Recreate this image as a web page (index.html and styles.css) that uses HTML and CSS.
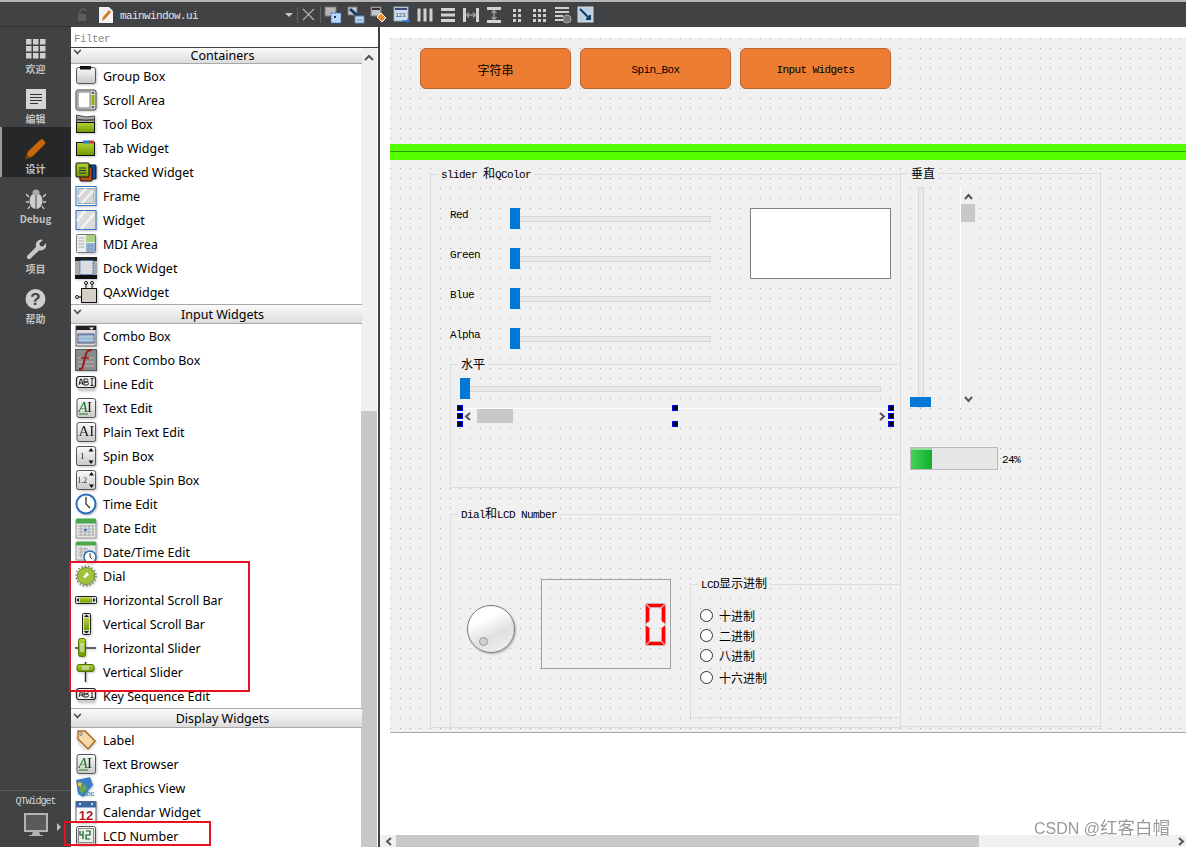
FILE: index.html
```html
<!DOCTYPE html>
<html lang="zh">
<head>
<meta charset="utf-8">
<title>Qt Designer</title>
<link rel="stylesheet" href="styles.css">
</head>
<body>
<svg class="defs" width="0" height="0">
  <defs>
    <linearGradient id="gBtn" x1="0" y1="0" x2="0" y2="1"><stop offset="0" stop-color="#fafafa"/><stop offset="1" stop-color="#c8c8c8"/></linearGradient>
    <linearGradient id="gGreen" x1="0" y1="0" x2="0" y2="1"><stop offset="0" stop-color="#b5d334"/><stop offset="1" stop-color="#6f9a00"/></linearGradient>
    <symbol id="i-ai" viewBox="0 0 22 22"><rect x="2" y="1.5" width="18.500" height="19" rx="2" fill="url(#gBtn)" stroke="#555"/><text x="3.500" y="15" class="ai">AI</text></symbol>
    <symbol id="i-aig" viewBox="0 0 22 22"><rect x="2" y="1.500" width="18.500" height="19" rx="2" fill="url(#gBtn)" stroke="#555"/><text x="3.500" y="15" class="ai aig">A</text><text x="12" y="15" class="ai">I</text><path d="M4 17h9" stroke="#1c7a1c"/></symbol>
    <symbol id="i-ab" viewBox="0 0 22 22"><rect x="1.500" y="3.500" width="19" height="11" rx="2.500" fill="#eee" stroke="#222" stroke-width="1.200"/><path d="M4 12l1.500-6h1l1.500 6M4.500 10h3M9 6h2.500q1.500 0 1.500 1.500T11.500 9H9zM9 9h3q1.500 0 1.500 1.500T12 12H9zM15.500 5.500h3M17 5.500v7M15.500 12.500h3" stroke="#222" fill="none"/><rect x="3" y="15.500" width="17" height="2" fill="#ccc"/></symbol>
  </defs>
</svg>
<div class="app">
  <div class="topstrip"></div>
  <header class="toolbar">
    <svg class="tb-lock" width="14" height="14" viewBox="0 0 14 14"><rect x="1" y="6" width="8" height="7" fill="#5a5c5e"/><path d="M3 6V3.500Q3 1 6 1t3 2.500" fill="none" stroke="#5a5c5e" stroke-width="1.500"/></svg>
    <svg class="tb-doc" width="14" height="16" viewBox="0 0 14 16"><path d="M0 0h10l4 4v12H0z" fill="#f2f2f2"/><path d="M3 14l1-4 6-7 2 2-6 7z" fill="#d47a1e"/></svg>
    <span class="tb-file">mainwindow.ui</span>
    <span class="tb-caret"></span>
    <span class="tb-sep"></span>
    <svg class="tb-close" width="13" height="13" viewBox="0 0 13 13"><path d="M1 1l11 11M12 1L1 12" stroke="#b4b4b4" stroke-width="1.100"/></svg>
    <span class="tb-sep tb-sep2"></span>
    <div class="tb-icons">
      <svg width="18" height="18" viewBox="0 0 18 18"><rect x="1" y="1" width="11" height="9" fill="#b8b8b8" stroke="#777"/><rect x="7" y="7" width="10" height="10" fill="#bcd8f8" stroke="#36c" stroke-dasharray="2 1"/><rect x="10" y="10" width="2" height="2" fill="#236"/></svg>
      <svg width="18" height="18" viewBox="0 0 18 18"><rect x="1" y="1" width="9" height="8" fill="#c8c8c8" stroke="#777"/><path d="M3 3l9 8" stroke="#0d3d6b" stroke-width="3"/><rect x="8" y="10" width="9" height="7" fill="#bcd8f8" stroke="#68a"/><path d="M10 14h5" stroke="#68a"/></svg>
      <svg width="18" height="18" viewBox="0 0 18 18"><rect x="1" y="1" width="10" height="9" fill="#c4c4c4" stroke="#777"/><rect x="2" y="2" width="8" height="2" fill="#333"/><path d="M11 7l5 5-4 4-5-5z" fill="#f28a2e" stroke="#fff"/></svg>
      <svg width="18" height="18" viewBox="0 0 18 18"><rect x="1" y="1" width="14" height="14" fill="#cfe0f4" stroke="#8aa"/><rect x="2" y="2" width="12" height="2" fill="#447"/><text x="2.500" y="11" class="tb-num">123</text><path d="M9 15h8M15 13v4" stroke="#27c" stroke-width="1.500"/></svg>
      <svg width="18" height="18" viewBox="0 0 18 18"><path d="M3 2.500v13M9 2.500v13M15 2.500v13" class="tool-line"/></svg>
      <svg width="18" height="18" viewBox="0 0 18 18"><path d="M2 3.500h14M2 9h14M2 14.500h14" class="tool-line"/></svg>
      <svg width="18" height="18" viewBox="0 0 18 18"><path d="M2.500 2v14M15.500 2v14" class="tool-line"/><path d="M5 9h8M7 6.500L4.500 9 7 11.500M11 6.500L13.500 9 11 11.500" stroke="#9a9a9a" stroke-width="1.500" fill="none"/></svg>
      <svg width="18" height="18" viewBox="0 0 18 18"><path d="M2 2.500h14M2 15.500h14" class="tool-line"/><path d="M9 5v8M6.500 7L9 4.500 11.500 7M6.500 11L9 13.500 11.500 11" stroke="#9a9a9a" stroke-width="1.500" fill="none"/></svg>
      <svg width="18" height="18" viewBox="0 0 18 18"><path d="M5 3h3v3H5zM10 3h3v3h-3zM5 8h3v3H5zM10 8h3v3h-3zM5 13h3v3H5zM10 13h3v3h-3z" fill="#cfcfcf"/></svg>
      <svg width="18" height="18" viewBox="0 0 18 18"><path d="M2 3h3v3H2zM7 3h3v3H7zM12 3h3v3h-3zM2 8h3v3H2zM7 8h3v3H7zM12 8h3v3h-3zM2 13h3v3H2zM7 13h3v3H7zM12 13h3v3h-3z" fill="#cfcfcf"/></svg>
      <svg width="18" height="18" viewBox="0 0 18 18"><path d="M1 2h14M1 6h14M1 10h8M1 14h8" stroke="#d0d0d0" stroke-width="2"/><circle cx="13" cy="13" r="4" fill="#777" stroke="#aaa"/></svg>
      <svg width="18" height="18" viewBox="0 0 18 18"><rect x="1" y="1" width="15" height="15" fill="#b9cfe6" stroke="#d8d8d8"/><path d="M3 3l10 10M13 9v4H9" stroke="#0b3c66" stroke-width="2" fill="none"/></svg>
    </div>
  </header>
  <div class="main">
    <nav class="sidebar">
      <div class="sb-btn">
        <svg class="sb-icon" width="20" height="20" viewBox="0 0 20 20"><path d="M0 0h5.500v5.500H0zM7 0h5.500v5.500H7zM14 0h5.500v5.500H14zM0 7h5.500v5.500H0zM7 7h5.500v5.500H7zM14 7h5.500v5.500H14zM0 14h5.500v5.500H0zM7 14h5.500v5.500H7zM14 14h5.500v5.500H14z" fill="#cfcfcf"/></svg>
        <span class="sb-label">欢迎</span>
      </div>
      <div class="sb-btn">
        <svg class="sb-icon" width="20" height="20" viewBox="0 0 20 20"><rect width="20" height="20" fill="#d6d6d6"/><path d="M4 5.500h12M4 8.500h12M4 11.500h12M4 14.500h8" stroke="#333"/></svg>
        <span class="sb-label">编辑</span>
      </div>
      <div class="sb-btn sb-active">
        <svg class="sb-icon" width="21" height="21" viewBox="0 0 21 21"><path d="M0.500 20.500L3 13 15 1.500q2-1.500 4 .5t.5 4L7.500 18z" fill="#c8660a"/><path d="M0.500 20.500L2 16l3 3z" fill="#7a4006"/></svg>
        <span class="sb-label">设计</span>
      </div>
      <div class="sb-btn">
        <svg class="sb-icon" width="20" height="20" viewBox="0 0 20 20"><ellipse cx="10" cy="12" rx="6.500" ry="8" fill="#cdcdcd"/><path d="M10 5v15" stroke="#404244"/><ellipse cx="10" cy="3.500" rx="3.500" ry="3" fill="#aaa"/><path d="M3 8L0 5M17 8l3-3M3 13H0M17 13h3M4 17l-2 3M16 17l2 3" stroke="#cdcdcd" stroke-width="1.300"/></svg>
        <span class="sb-label">Debug</span>
      </div>
      <div class="sb-btn">
        <svg class="sb-icon" width="20" height="20" viewBox="0 0 20 20"><path d="M1 17L10 8Q9 3 13 1q2-.8 4 0l-3.500 3 .5 3 3 .5L20 4q1 3-1 5.500t-6 2L4 20q-2 .5-3-1z" fill="#c8c8c8"/></svg>
        <span class="sb-label">项目</span>
      </div>
      <div class="sb-btn">
        <svg class="sb-icon" width="21" height="21" viewBox="0 0 21 21"><circle cx="10.500" cy="10.500" r="10" fill="#cfcfcf"/><text x="10.500" y="16" class="help-q">?</text></svg>
        <span class="sb-label">帮助</span>
      </div>
      <div class="sb-bottom">
        <span class="sb-kit">QTWidget</span>
        <div class="sb-target">
          <svg width="24" height="24" viewBox="0 0 24 24"><rect x="1" y="1" width="22" height="17" fill="#585a5c" stroke="#b4b4b4" stroke-width="2"/><path d="M9 18h6l1 4h3v1H5v-1h3z" fill="#b4b4b4"/></svg>
          <span class="sb-arrow"></span>
        </div>
      </div>
    </nav>

    <aside class="panel">
      <div class="filter">Filter</div>
      <div class="box">
        <div class="list">
          <div class="cat cat-first"><span class="chev"></span><span>Containers</span></div>
          <div class="row"><svg class="ic" viewBox="0 0 22 22"><rect x="1.500" y="2.500" width="19" height="16" rx="2" fill="url(#gBtn)" stroke="#555"/><rect x="5" y="1" width="11" height="3.500" fill="#111"/></svg><span>Group Box</span></div>
          <div class="row"><svg class="ic" viewBox="0 0 22 22"><rect x="1" y="1" width="20" height="20" rx="2" fill="#ddd" stroke="#444"/><rect x="3" y="3" width="12" height="16" fill="#fff" stroke="#777"/><rect x="16.500" y="6" width="3" height="10" fill="#8fb000"/><path d="M18 2.500l1.500 2h-3zM18 19.500l1.500-2h-3z" fill="#111"/></svg><span>Scroll Area</span></div>
          <div class="row"><svg class="ic" viewBox="0 0 22 22"><path d="M1.500 2l9 2 9-1v4h-18zM1.500 6l9 1.500 9-1V10h-18z" fill="#aaa" stroke="#444"/><rect x="1.500" y="9.500" width="18" height="10" fill="url(#gGreen)" stroke="#111"/></svg><span>Tool Box</span></div>
          <div class="row"><svg class="ic" viewBox="0 0 22 22"><rect x="1.500" y="5.500" width="18" height="13" fill="url(#gGreen)" stroke="#111"/><rect x="8" y="3.500" width="6" height="3" fill="#2a7dd0"/><rect x="14" y="3.500" width="5" height="3" fill="#d8362a"/></svg><span>Tab Widget</span></div>
          <div class="row"><svg class="ic" viewBox="0 0 22 22"><rect x="9" y="4" width="12" height="14" rx="1" fill="#124a9c" stroke="#111"/><rect x="5" y="6" width="12" height="14" rx="1" fill="#c04c10" stroke="#111"/><rect x="1" y="2" width="13" height="14" rx="1" fill="url(#gGreen)" stroke="#111"/><path d="M4 7h7M4 9.500h7M4 12h7" stroke="#234"/></svg><span>Stacked Widget</span></div>
          <div class="row"><svg class="ic" viewBox="0 0 22 22"><rect x="1" y="1.500" width="20" height="19" fill="#fff" stroke="#2d6fc0"/><rect x="3" y="3.500" width="16" height="15" fill="#d6d6d6" stroke="#8aa"/><path d="M3 12l8-8.500M7 18l11-12" stroke="#f2f2f2" stroke-width="2.500"/></svg><span>Frame</span></div>
          <div class="row"><svg class="ic" viewBox="0 0 22 22"><rect x="1" y="1.500" width="20" height="19" fill="#dcdcdc" stroke="#2d6fc0"/><path d="M2 12l8-10M6 20L19 5" stroke="#f4f4f4" stroke-width="2.500"/></svg><span>Widget</span></div>
          <div class="row"><svg class="ic" viewBox="0 0 22 22"><rect x="1.500" y="1.500" width="19" height="18" rx="1" fill="#eee" stroke="#777"/><rect x="11" y="2" width="9" height="7" fill="#a8d080"/><rect x="11" y="10" width="9" height="9" fill="#8bb6e6"/><path d="M3.500 5h6M3.500 8h6M3.500 11h6M3.500 14h6M11 13h9M11 16h9M14 10v9M17 10v9" stroke="#9a9a9a" stroke-width=".8"/></svg><span>MDI Area</span></div>
          <div class="row"><svg class="ic" viewBox="0 0 22 22"><rect x="0" y="0" width="22" height="4" fill="#222"/><rect x="0" y="18" width="22" height="4" fill="#111"/><rect x="0" y="4" width="22" height="14" fill="#aaa"/><rect x="5" y="3.500" width="13" height="14" fill="#ddd" stroke="#2d6fc0" stroke-dasharray="1.500 1"/></svg><span>Dock Widget</span></div>
          <div class="row"><svg class="ic" viewBox="0 0 22 22"><rect x="6.500" y="7.500" width="15" height="14" fill="#d4d0c8" stroke="#111"/><path d="M11 7.500V3M17 7.500V3M1 16h5" stroke="#111"/><circle cx="11" cy="2" r="1.500" fill="#fff" stroke="#111"/><circle cx="17" cy="2" r="1.500" fill="#fff" stroke="#111"/><circle cx="2" cy="16" r="1.500" fill="#fff" stroke="#111"/></svg><span>QAxWidget</span></div>

          <div class="cat"><span class="chev"></span><span>Input Widgets</span></div>
          <div class="row"><svg class="ic" viewBox="0 0 22 22"><rect x="1" y="1" width="20" height="20" fill="#ddd" stroke="#666"/><rect x="1" y="1" width="20" height="4" fill="#222"/><path d="M14 2.500h5l-2.500 2.500z" fill="#fff"/><rect x="3" y="9" width="16" height="9" fill="#8eb0d8" stroke="#557"/><path d="M3 12h16M3 15h16" stroke="#cdd"/></svg><span>Combo Box</span></div>
          <div class="row"><svg class="ic" viewBox="0 0 22 22"><rect x="0.500" y="0.500" width="21" height="21" fill="#8a8a8a" stroke="#555"/><path d="M3 9h16M3 13h16M3 17h16" stroke="#aaa" stroke-width="1.500"/><path d="M4 20q3 1 4-3l3-12q1-4 6-4" fill="none" stroke="#a01818" stroke-width="2"/><path d="M6 9h8" stroke="#a01818" stroke-width="1.500"/></svg><span>Font Combo Box</span></div>
          <div class="row"><svg class="ic"><use href="#i-ab"/></svg><span>Line Edit</span></div>
          <div class="row"><svg class="ic"><use href="#i-aig"/></svg><span>Text Edit</span></div>
          <div class="row"><svg class="ic"><use href="#i-ai"/></svg><span>Plain Text Edit</span></div>
          <div class="row"><svg class="ic" viewBox="0 0 22 22"><rect x="1.500" y="1.500" width="19" height="19" rx="2" fill="url(#gBtn)" stroke="#555"/><text x="5" y="14" class="spin">1</text><path d="M16 3l2.500 3.500h-5zM16 19l2.500-3.500h-5z" fill="#111"/></svg><span>Spin Box</span></div>
          <div class="row"><svg class="ic" viewBox="0 0 22 22"><rect x="1.500" y="1.500" width="19" height="19" rx="2" fill="url(#gBtn)" stroke="#555"/><text x="2.500" y="14" class="spin spin-s">1.2</text><path d="M16.500 3l2.500 3.500h-5zM16.500 19l2.500-3.500h-5z" fill="#111"/></svg><span>Double Spin Box</span></div>
          <div class="row"><svg class="ic" viewBox="0 0 22 22"><circle cx="11" cy="11" r="9.500" fill="#fff" stroke="#2d6fb8" stroke-width="2"/><path d="M11 4v7l4 4" fill="none" stroke="#333" stroke-width="1.300"/></svg><span>Time Edit</span></div>
          <div class="row"><svg class="ic" viewBox="0 0 22 22"><rect x="1" y="4" width="20" height="17" fill="#e6e6e6" stroke="#999"/><rect x="1" y="1.500" width="20" height="5" rx="1" fill="#4aa84a"/><path d="M3 9h16M3 12h16M3 15h16M3 18h16M6 8v11M10 8v11M14 8v11M18 8v11" stroke="#aaa"/><rect x="9" y="12" width="3" height="2" fill="#47c"/></svg><span>Date Edit</span></div>
          <div class="row"><svg class="ic" viewBox="0 0 22 22"><rect x="1" y="2" width="20" height="17" fill="#e6e6e6" stroke="#999"/><rect x="1" y="0.500" width="20" height="4" rx="1" fill="#4aa84a"/><path d="M3 8h10M3 11h8M3 14h6M6 6v11M10 6v7" stroke="#aaa"/><circle cx="15" cy="16" r="6" fill="#fff" stroke="#2d6fb8" stroke-width="1.500"/><path d="M15 12v4l2 2" fill="none" stroke="#333"/></svg><span>Date/Time Edit</span></div>
          <div class="row"><svg class="ic" viewBox="0 0 22 22"><circle cx="11" cy="11" r="10" fill="none" stroke="#777" stroke-width="1.500" stroke-dasharray="1.500 2"/><circle cx="11" cy="11" r="8.500" fill="#a2c23c" stroke="#6a8a20"/><path d="M8 12l4-5 2 3-4 3z" fill="#fff"/></svg><span>Dial</span></div>
          <div class="row"><svg class="ic" viewBox="0 0 22 22"><rect x="0.500" y="7.500" width="21" height="7" rx="1" fill="#ddd" stroke="#222"/><rect x="5" y="8.500" width="12" height="5" fill="url(#gGreen)"/><path d="M1.500 11L4 9v4zM20.500 11L18 9v4z" fill="#111"/></svg><span>Horizontal Scroll Bar</span></div>
          <div class="row"><svg class="ic" viewBox="0 0 22 22"><rect x="7.500" y="0.500" width="8" height="21" rx="1" fill="#ddd" stroke="#222"/><rect x="9" y="5" width="5" height="12" fill="url(#gGreen)"/><path d="M11.500 1.500L14 4H9zM11.500 20.500L14 18H9z" fill="#111"/></svg><span>Vertical Scroll Bar</span></div>
          <div class="row"><svg class="ic" viewBox="0 0 22 22"><path d="M0 11h21" stroke="#333" stroke-width="1.500"/><rect x="3.500" y="1.500" width="7" height="18" rx="2" fill="url(#gGreen)" stroke="#557000"/><path d="M6 6v9M8 6v9" stroke="#eef"/></svg><span>Horizontal Slider</span></div>
          <div class="row"><svg class="ic" viewBox="0 0 22 22"><path d="M10.500 1v20" stroke="#333" stroke-width="1.500"/><rect x="2" y="3.500" width="17" height="7" rx="2" fill="url(#gGreen)" stroke="#557000"/><path d="M7 6h7M7 8h7" stroke="#eef"/></svg><span>Vertical Slider</span></div>
          <div class="row"><svg class="ic"><use href="#i-ab"/></svg><span>Key Sequence Edit</span></div>

          <div class="cat"><span class="chev"></span><span>Display Widgets</span></div>
          <div class="row"><svg class="ic" viewBox="0 0 22 22"><path d="M3 2h7l10 10-7 8L3 10z" fill="#f6d9a8" stroke="#b06a20" stroke-width="1.500"/><circle cx="6" cy="5" r="1.300" fill="#fff" stroke="#777"/><path d="M6 4Q1 4 2 10t8 11" fill="none" stroke="#bbb" stroke-width=".7"/></svg><span>Label</span></div>
          <div class="row"><svg class="ic"><use href="#i-aig"/></svg><span>Text Browser</span></div>
          <div class="row"><svg class="ic" viewBox="0 0 22 22"><path d="M1 3l14-3 3 8-10 12-5-3z" fill="#3d7fc4"/><path d="M3 5l4 1-1 4-3-1z" fill="#e8c83a"/><path d="M4 12l6-5 2 5-5 5z" fill="#6aa84a"/><text x="8" y="19" class="abc">abc</text></svg><span>Graphics View</span></div>
          <div class="row"><svg class="ic" viewBox="0 0 22 22"><rect x="1" y="0.500" width="20" height="21" fill="#fff" stroke="#666"/><rect x="1" y="0.500" width="20" height="6" fill="#3a68a8"/><circle cx="5" cy="3" r="1" fill="#fff"/><circle cx="17" cy="3" r="1" fill="#fff"/><text x="11" y="19" class="cal">12</text></svg><span>Calendar Widget</span></div>
          <div class="row"><svg class="ic" viewBox="0 0 22 22"><rect x="1.500" y="1.500" width="19" height="19" rx="2" fill="url(#gBtn)" stroke="#555"/><rect x="3.500" y="3.500" width="15" height="14" fill="#e8efe6" stroke="#888"/><path d="M5 6v4h3V6M8 10v4M11 6h4v4h-4v4h4" fill="none" stroke="#0c5a2c" stroke-width="1.200"/></svg><span>LCD Number</span></div>
        </div>
        <div class="list-scroll">
          <div class="ls-track"><svg width="10" height="7" viewBox="0 0 10 7" class="ls-up"><path d="M1 6l4-4 4 4" fill="none" stroke="#555" stroke-width="2"/></svg></div>
          <div class="ls-thumb"></div>
        </div>
      </div>
    </aside>

    <main class="editor">
      <div class="form-area">
        <div class="form">
          <button class="pbtn pb1"><span class="cj">字符串</span></button>
          <button class="pbtn pb2">Spin_Box</button>
          <button class="pbtn pb3">Input Widgets</button>
          <div class="hline"></div>

          <div class="gbox g-slider"><span class="gtitle">slider <span class="cj">和</span>QColor</span></div>
          <div class="gbox g-horiz"><span class="gtitle t-horiz"><span class="cj">水平</span></span></div>
          <div class="gbox g-dial"><span class="gtitle">Dial<span class="cj">和</span>LCD Number</span></div>
          <div class="gbox g-lcd"><span class="gtitle">LCD<span class="cj">显示进制</span></span></div>
          <div class="gbox g-vert"><span class="gtitle t-vert"><span class="cj">垂直</span></span></div>

          <div class="rgba">
            <span class="lbl">Red</span><div class="hslider"><i></i></div>
            <span class="lbl">Green</span><div class="hslider"><i></i></div>
            <span class="lbl">Blue</span><div class="hslider"><i></i></div>
            <span class="lbl">Alpha</span><div class="hslider"><i></i></div>
          </div>
          <div class="swatch"></div>

          <div class="hslider hs-main"><i></i></div>
          <div class="hscroll">
            <svg class="arw" width="7" height="9" viewBox="0 0 7 9"><path d="M6 1L2 4.500 6 8" fill="none" stroke="#555" stroke-width="2"/></svg>
            <div class="hs-thumb"></div>
            <svg class="arw arw-r" width="7" height="9" viewBox="0 0 7 9"><path d="M1 1l4 3.500L1 8" fill="none" stroke="#555" stroke-width="2"/></svg>
          </div>
          <i class="hd hd-l1"></i><i class="hd hd-l2"></i><i class="hd hd-l3"></i>
          <i class="hd hd-m1"></i><i class="hd hd-m3"></i>
          <i class="hd hd-r1"></i><i class="hd hd-r2"></i><i class="hd hd-r3"></i>

          <div class="vslider"><i></i></div>
          <div class="vscroll">
            <svg width="9" height="7" viewBox="0 0 9 7"><path d="M1 6l3.500-4L8 6" fill="none" stroke="#555" stroke-width="2"/></svg>
            <div class="vs-thumb"></div>
            <svg class="vs-down" width="9" height="7" viewBox="0 0 9 7"><path d="M1 1l3.500 4L8 1" fill="none" stroke="#555" stroke-width="2"/></svg>
          </div>

          <div class="progress"><div class="bar"></div></div>
          <span class="pct">24%</span>

          <div class="dial"><i></i></div>
          <div class="lcd">
            <svg width="21" height="43" viewBox="0 0 21 43">
              <g fill="#ff0000" stroke="#c9b4b4" stroke-width=".8">
                <path d="M1 0.500h19l-4 4H5z"/><path d="M0.500 1l4 4v13l-4 3z"/><path d="M20.500 1l-4 4v13l4 3z"/>
                <path d="M0.500 22l4 3v13l-4 4z"/><path d="M20.500 22l-4 3v13l4 4z"/><path d="M1 42.500h19l-4-4H5z"/>
              </g>
            </svg>
          </div>

          <div class="radios">
            <label class="radio"><i></i><span class="cj">十进制</span></label>
            <label class="radio"><i></i><span class="cj">二进制</span></label>
            <label class="radio"><i></i><span class="cj">八进制</span></label>
            <label class="radio r-last"><i></i><span class="cj">十六进制</span></label>
          </div>
        </div>
      </div>
      <div class="bottom-scroll">
        <svg class="bs-l" width="7" height="9" viewBox="0 0 7 9"><path d="M6 1L2 4.500 6 8" fill="none" stroke="#555" stroke-width="2"/></svg>
        <div class="bs-thumb"></div>
        <svg class="bs-r" width="7" height="9" viewBox="0 0 7 9"><path d="M1 1l4 3.500L1 8" fill="none" stroke="#555" stroke-width="2"/></svg>
      </div>
    </main>
  </div>
  <div class="redbox rb1"></div>
  <div class="redbox rb2"></div>
  <div class="watermark">CSDN @<span class="wm-cj">红客白帽</span></div>
</div>
</body>
</html>
```

FILE: styles.css
```css
* { box-sizing: border-box; }
html, body { margin: 0; padding: 0; background: #fff; }
.defs { position: absolute; }
.app {
  position: relative;
  width: 1186px;
  height: 847px;
  overflow: hidden;
  display: flex;
  flex-direction: column;
  color: #000;
}
/* SimSun-like metrics: 6px per latin character, 12px per CJK character */
.tb-file, .filter, .form, .pbtn {
  font-family: "Liberation Mono", "Noto Sans CJK SC", monospace;
  font-size: 11px;
  letter-spacing: -0.6px;
}
.cj { font-family: "Noto Sans CJK SC", sans-serif; font-size: 12px; letter-spacing: 0; }

/* top bar */
.topstrip { height: 2px; background: #b6b6b6; flex: none; }
.toolbar {
  height: 25px;
  flex: none;
  background: #404244;
  display: flex;
  align-items: center;
  padding-left: 77px;
}
.tb-lock { margin-right: 8px; }
.tb-doc { margin-right: 7px; }
.tb-file { width: 165px; color: #e4e4e4; margin-top: 2px; }
.tb-caret { width: 0; height: 0; border-left: 4px solid transparent; border-right: 4px solid transparent; border-top: 4px solid #c8c8c8; margin-right: 4px; }
.tb-sep { width: 1px; height: 16px; background: #626466; margin-right: 4px; }
.tb-close { margin-right: 5px; }
.tb-sep2 { margin-right: 3px; }
.tb-icons { display: flex; gap: 5px; align-items: center; }
.tool-line { stroke: #d2d2d2; stroke-width: 3; fill: none; }
.tb-num { font: 6px "Liberation Sans", sans-serif; fill: #246; }

.main { flex: 1; display: flex; min-height: 0; }

/* sidebar */
.sidebar { width: 71px; flex: none; background: #404244; display: flex; flex-direction: column; border-top: 1px solid #303234; margin-top: -1px; }
.sb-btn { height: 50px; flex: none; display: flex; flex-direction: column; align-items: center; padding-top: 11px; }
.sb-icon { height: 22px; }
.sb-label {
  margin-top: 2px;
  font: bold 10px/14px "Noto Sans CJK SC", "Liberation Sans", sans-serif;
  color: #bfc1c3;
}
.sb-active { background: #262729; border-left: 2px solid #9a9a9a; padding-right: 2px; }
.help-q { font: bold 17px "Liberation Sans", sans-serif; fill: #404244; text-anchor: middle; }
.sb-bottom {
  margin-top: auto;
  height: 57px;
  border-top: 1px solid #5a5c5e;
  display: flex;
  flex-direction: column;
  align-items: center;
  padding-top: 5px;
}
.sb-kit { color: #d4d4d4; font: 10px/12px "Liberation Mono", monospace; letter-spacing: -1px; }
.sb-target { position: relative; margin-top: 5px; height: 24px; }
.sb-arrow { position: absolute; left: 33px; top: 10px; width: 0; height: 0; border-top: 4px solid transparent; border-bottom: 4px solid transparent; border-left: 4px solid #c0c0c0; }

/* widget box */
.panel { width: 307px; flex: none; display: flex; flex-direction: column; background: #fff; }
.filter { height: 21px; flex: none; padding: 5px 3px 0; line-height: 15px; color: #8a8a8a; border-bottom: 1px solid #404244; overflow: hidden; }
.box { flex: 1; display: flex; min-height: 0; overflow: hidden; }
.list { width: 291px; flex: none; font: 12.500px "Noto Sans", sans-serif; color: #000; }
.cat {
  position: relative;
  height: 20px;
  padding-left: 12px;
  display: flex;
  align-items: center;
  justify-content: center;
  background: linear-gradient(#fafafa, #dcdcdc);
  border-top: 1px solid #a8a8a8;
  border-bottom: 1px solid #a8a8a8;
  line-height: 17px;
}
.cat-first { height: 16px; border-top: 0; line-height: 15px; }
.chev { position: absolute; left: 3px; top: 2px; width: 7px; height: 7px; border-right: 2px solid #555; border-bottom: 2px solid #555; transform: scale(.8,.8) rotate(45deg); }
.cat-first .chev { top: -1px; }
.row { height: 24px; display: flex; align-items: center; gap: 6px; padding-left: 4px; white-space: nowrap; }
.ic { width: 22px; height: 22px; flex: none; filter: drop-shadow(1px 1px 1px rgba(0,0,0,.22)); }
.ai { font: 15px "Liberation Serif", serif; fill: #222; }
.aig { fill: #1c7a1c; font-style: italic; }
.spin { font: 9px "Liberation Serif", serif; fill: #222; }
.spin-s { font-size: 7.500px; }
.abc { font: 7px "Liberation Sans", sans-serif; fill: #27a; }
.cal { font: bold 13px "Liberation Sans", sans-serif; fill: #b01818; text-anchor: middle; }
.list-scroll { width: 16px; flex: none; display: flex; flex-direction: column; background: #f0f0f0; margin-left: -1px; }
.ls-track { height: 363px; flex: none; padding: 6px 0 0 3px; }
.ls-up { display: block; }
.ls-thumb { flex: 1; background: #c8c8c8; }

/* editor */
.editor {
  flex: 1;
  min-width: 0;
  border-left: 2px solid #404244;
  display: flex;
  flex-direction: column;
  background: #fff;
}
.form-area { flex: 1; min-height: 0; padding: 11px 0 0 10px; }
.form {
  position: relative;
  width: 796px;
  height: 695px;
  border-bottom: 1px solid #a8a8a8;
  overflow: hidden;
  background-color: #f0f0f0;
  background-image: linear-gradient(to right, transparent 1px, #f0f0f0 1px), linear-gradient(to bottom, #a6a6a6 1px, #f0f0f0 1px);
  background-size: 10px 10px;
}
.bottom-scroll { height: 12px; flex: none; background: #f0f0f0; display: flex; align-items: center; }
.bs-l { margin: 0 4px 0 5px; flex: none; }
.bs-thumb { width: 583px; height: 12px; background: #c8c8c8; flex: none; }
.bs-r { margin-left: auto; margin-right: 1px; }

/* canvas widgets */
.pbtn {
  position: absolute;
  top: 10px;
  width: 151px;
  height: 41px;
  background: #ed7d31;
  border: 1px solid #b9652c;
  border-radius: 6px;
  color: #000;
  padding: 2px 0 0;
}
.pb1 { left: 30px; }
.pb2 { left: 190px; }
.pb3 { left: 350px; }
.hline { position: absolute; left: 0; right: 0; top: 106px; height: 16px; background: linear-gradient(#55ff00 7px, #2f9a10 7px, #2f9a10 8px, #55ff00 8px); }

.gbox { position: absolute; border: 1px solid #dcdcdc; }
.g-slider { left: 40px; top: 136px; width: 471px; height: 554px; }
.g-horiz { left: 60px; top: 326px; width: 451px; height: 124px; }
.g-dial { left: 60px; top: 476px; width: 451px; height: 214px; }
.g-lcd { left: 300px; top: 546px; width: 211px; height: 134px; }
.g-vert { left: 510px; top: 135px; width: 201px; height: 554px; }
.gtitle { position: absolute; top: -9px; left: 7px; padding: 0 3px; background: #f0f0f0; line-height: 14px; white-space: nowrap; }
.t-horiz { top: -10px; line-height: 18px; }
.t-vert { top: -10px; line-height: 18px; }

.rgba { position: absolute; left: 60px; top: 170px; display: grid; grid-template-columns: 60px 201px; grid-auto-rows: 21px; row-gap: 19px; }
.lbl { line-height: 14px; }
.hslider { position: relative; width: 201px; height: 21px; }
.hslider::before { content: ""; position: absolute; left: 0; right: 0; top: 8px; height: 4px; background: #e8eaea; border: 1px solid #d6d8d8; }
.hslider i { position: absolute; left: 0; top: 0; width: 10px; height: 21px; background: #0078d7; }
.hs-main { position: absolute; left: 70px; top: 340px; width: 421px; }
.swatch { position: absolute; left: 360px; top: 170px; width: 141px; height: 71px; background: #fff; border: 1px solid #808080; }

.hscroll { position: absolute; left: 70px; top: 370px; width: 431px; height: 15px; border-top: 1px solid #fff; display: flex; align-items: center; background: #f0f0f0; }
.arw { margin-left: 4px; flex: none; }
.hs-thumb { width: 36px; height: 14px; margin-left: 6px; background: #c8c8c8; }
.arw-r { margin-left: auto; margin-right: 5px; }
.hd { position: absolute; width: 6px; height: 6px; background: #000; border: 1px solid #0000ff; }
.hd-l1 { left: 67px; top: 367px; }
.hd-l2 { left: 67px; top: 375px; }
.hd-l3 { left: 67px; top: 383px; }
.hd-m1 { left: 282px; top: 367px; }
.hd-m3 { left: 282px; top: 383px; }
.hd-r1 { left: 498px; top: 367px; }
.hd-r2 { left: 498px; top: 375px; }
.hd-r3 { left: 498px; top: 383px; }

.vslider { position: absolute; left: 520px; top: 149px; width: 21px; height: 221px; }
.vslider::before { content: ""; position: absolute; left: 8px; top: 0; bottom: 0; width: 4px; background: #e8eaea; border: 1px solid #d6d8d8; }
.vslider i { position: absolute; left: 0; bottom: 1px; width: 21px; height: 10px; background: #0078d7; }
.vscroll { position: absolute; left: 570px; top: 149px; width: 15px; height: 221px; border-left: 1px solid #fff; background: #f0f0f0; display: flex; flex-direction: column; align-items: center; padding-top: 6px; }
.vscroll svg { flex: none; }
.vs-thumb { width: 14px; height: 18px; margin-top: 4px; background: #c8c8c8; flex: none; }
.vs-down { margin-top: auto; margin-bottom: 5px; }

.progress { position: absolute; left: 520px; top: 409px; width: 88px; height: 23px; border: 1px solid #b9b9b9; background: #e6e6e6; }
.bar { width: 21px; height: 100%; background: linear-gradient(#9ade9c 2px, transparent 2px), linear-gradient(to right, #45d05a, #10b02c); }
.pct { position: absolute; left: 612px; top: 415px; line-height: 14px; }

.dial { position: absolute; left: 77px; top: 567px; width: 48px; height: 48px; border-radius: 50%; border: 1px solid #7c7c7c; background: linear-gradient(155deg, #fff 30%, #e0e0e0 62%, #f4f4f4); box-shadow: 1px 1px 2px #aaa; }
.dial i { position: absolute; left: 11px; top: 31px; width: 9px; height: 9px; border-radius: 50%; border: 1px solid #999; background: #d0d0d0; }
.lcd { position: absolute; left: 151px; top: 541px; width: 130px; height: 90px; border: 1px solid #a0a0a0; padding: 23px 4px 0 0; display: flex; justify-content: flex-end; align-items: flex-start; }

.radios { position: absolute; left: 310px; top: 569px; display: flex; flex-direction: column; gap: 4px; }
.radio { display: flex; align-items: center; gap: 6px; height: 16px; }
.radio i { width: 13px; height: 13px; border-radius: 50%; border: 1px solid #333; background: #fff; flex: none; }
.r-last { margin-top: 2px; }

/* overlays */
.redbox { position: absolute; border: 2px solid #e81123; pointer-events: none; }
.rb1 { left: 69px; top: 561px; width: 181px; height: 131px; }
.rb2 { left: 64px; top: 821px; width: 147px; height: 25px; }
.watermark { position: absolute; right: 16px; bottom: 8px; font: 16px/20px "Liberation Sans", sans-serif; color: #8e8e8e; opacity: .9; white-space: nowrap; }
.wm-cj { font: 17.500px/20px "Noto Sans CJK SC", sans-serif; }
```
